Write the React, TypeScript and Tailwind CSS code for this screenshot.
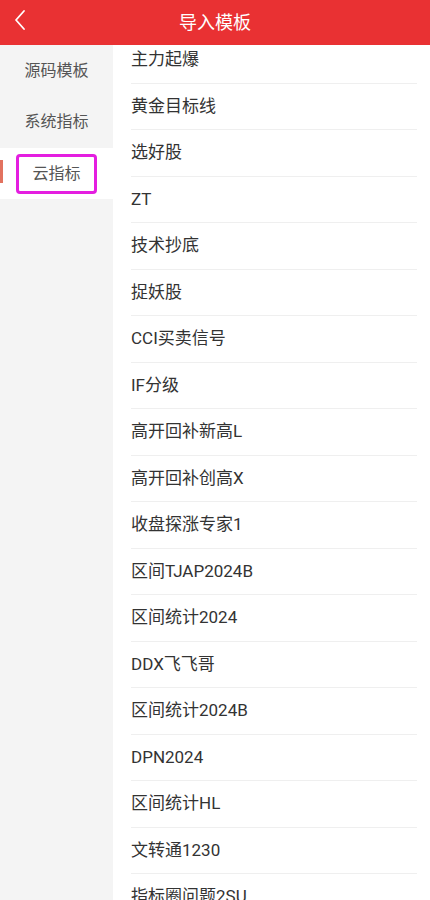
import React from "react";

const items = [
  "主力起爆",
  "黄金目标线",
  "选好股",
  "ZT",
  "技术抄底",
  "捉妖股",
  "CCI买卖信号",
  "IF分级",
  "高开回补新高L",
  "高开回补创高X",
  "收盘探涨专家1",
  "区间TJAP2024B",
  "区间统计2024",
  "DDX飞飞哥",
  "区间统计2024B",
  "DPN2024",
  "区间统计HL",
  "文转通1230",
  "指标圈问题2SU",
];

const font = { fontFamily: '"Roboto", "Noto Sans CJK SC", sans-serif' };

export default function App() {
  return (
    <div className="w-[430px] h-[900px] overflow-hidden bg-white flex flex-col" style={font}>
      <div className="h-[45px] shrink-0 bg-[#e93133] flex items-center relative z-10">
        <svg className="absolute left-[13px] top-[9px]" width="14" height="22" viewBox="0 0 14 22">
          <path d="M11 2 L3 11 L11 20" fill="none" stroke="white" strokeWidth="1.8" strokeLinecap="round" strokeLinejoin="round" />
        </svg>
        <div className="flex-1 text-center text-white text-[18px]">导入模板</div>
      </div>
      <div className="flex flex-1 min-h-0">
        <div className="w-[113px] shrink-0 bg-[#f4f4f4] flex flex-col">
          <div className="h-[51px] flex items-center justify-center text-[16px] text-[#555]">源码模板</div>
          <div className="h-[52px] flex items-center justify-center text-[16px] text-[#555]">系统指标</div>
          <div className="h-[51px] bg-white flex items-center justify-center relative">
            <div className="absolute left-0 top-[12px] w-[3px] h-[23px] bg-[#e2725f]" />
            <div className="w-[81px] h-[40px] border-[3px] border-[#e41ee0] rounded-[4px] flex items-center justify-center text-[16px] text-[#555]">
              云指标
            </div>
          </div>
        </div>
        <div className="flex-1 overflow-hidden">
          <div className="mt-[-8px] pl-[18px] pr-[13px]">
            {items.map((t) => (
              <div
                key={t}
                className="h-[46.5px] flex items-center border-b border-[#efefef] text-[17px] text-[#333]"
              >
                {t}
              </div>
            ))}
          </div>
        </div>
      </div>
    </div>
  );
}
